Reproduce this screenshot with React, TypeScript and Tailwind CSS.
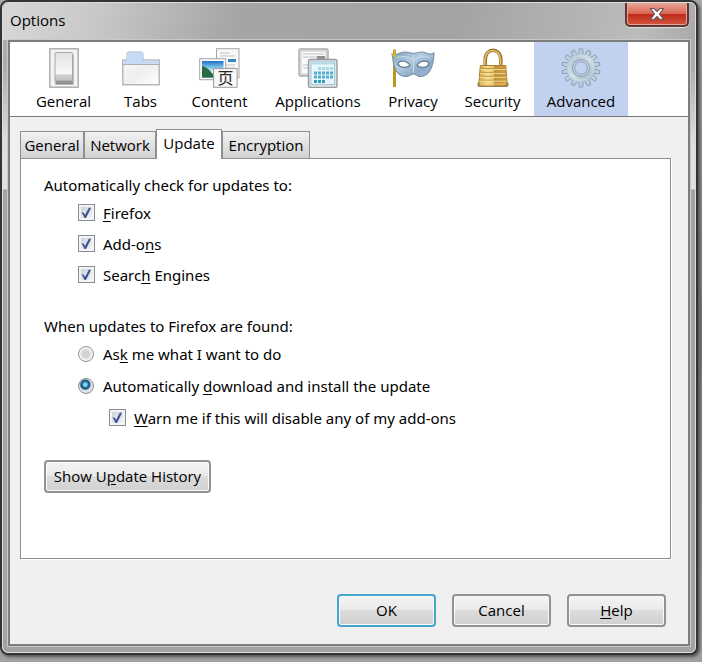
import { useState } from "react";
import type { ReactNode } from "react";

function GeneralIcon() {
  return (
    <svg width="30" height="40" viewBox="0 0 30 40" aria-hidden="true">
      <defs>
        <linearGradient id="switch-face" x1="0" y1="0" x2="0" y2="1">
          <stop offset="0" stopColor="#e2e2e2" />
          <stop offset="0.7" stopColor="#f8f8f8" />
          <stop offset="0.75" stopColor="#d2d2d2" />
          <stop offset="1" stopColor="#bcbcbc" />
        </linearGradient>
      </defs>
      <rect x="0.8" y="0.8" width="28.4" height="38.4" fill="#f3f3f3" stroke="#a5a5a5" strokeWidth="1.3" />
      <path d="M7 34 L6 36.500 H24.500 V7 L23 5 Z" fill="#888" />
      <rect x="6" y="4.500" width="17.500" height="30" rx="1" fill="url(#switch-face)" stroke="#a8a8a8" />
      <path d="M7 33.500 H23" stroke="#8b8b8b" strokeWidth="1.500" />
    </svg>
  );
}

function TabsIcon() {
  return (
    <svg width="38" height="40" viewBox="0 0 38 40" aria-hidden="true">
      <defs>
        <linearGradient id="tab-page" x1="0" y1="0" x2="1" y2="1">
          <stop offset="0" stopColor="#fafafa" />
          <stop offset="0.5" stopColor="#eeeeef" />
          <stop offset="1" stopColor="#fff" />
        </linearGradient>
      </defs>
      <path d="M5 12 V5.500 Q5 4 6.500 4 H19.500 Q21 4 21 5.500 V12" fill="#c9ddf8" stroke="#a9bddb" />
      <rect x="0.8" y="12" width="36.400" height="24.800" fill="url(#tab-page)" stroke="#a6a7a9" strokeWidth="1.200" />
      <path d="M1.300 16.500 V12.500 H5 V6 H20.500 V12.500 H36.700 V16.500 Z" fill="#c6daf6" />
      <path d="M1 16.500 H37" stroke="#aaaeb6" />
    </svg>
  );
}

function ContentIcon() {
  return (
    <svg width="42" height="40" viewBox="0 0 42 40" aria-hidden="true">
      <defs>
        <linearGradient id="photo" x1="0" y1="0" x2="0" y2="1">
          <stop offset="0" stopColor="#1c72c8" />
          <stop offset="0.450" stopColor="#8ed2ef" />
          <stop offset="0.650" stopColor="#d8f1f8" />
          <stop offset="1" stopColor="#3382ba" />
        </linearGradient>
      </defs>
      <rect x="17.500" y="0.700" width="22.500" height="29" fill="#f8f8f8" stroke="#a6a6a6" />
      <path d="M21 5 H31 M21 8 H36 M21 17 H36 M21 20 H36" stroke="#bbc4ca" />
      <path d="M29 12.500 H37" stroke="#3689bd" strokeWidth="3" />
      <rect x="0.700" y="10.700" width="26" height="21" fill="#fafafa" stroke="#a0a5a9" />
      <rect x="3" y="13" width="21.500" height="16.500" fill="url(#photo)" />
      <path d="M3 18 Q8 19 13 25 L17 29.500 H3 Z" fill="#286a46" />
      <path d="M12 25 L19 20 L24.500 26 V28 Z" fill="#eef6f4" />
      <rect x="14.600" y="20.600" width="23.500" height="18.700" fill="#f8f8f8" stroke="#9c9c9c" />
      <text x="26.500" y="36" fontSize="16" textAnchor="middle" fill="#252525" fontFamily="Noto Sans CJK SC, sans-serif">页</text>
    </svg>
  );
}

function ApplicationsIcon() {
  return (
    <svg width="40" height="40" viewBox="0 0 40 40" aria-hidden="true">
      <rect x="1" y="1" width="29" height="27" rx="1.500" fill="#e9ebed" stroke="#aaa" strokeWidth="1.400" />
      <rect x="3" y="3" width="25" height="23" fill="#fafafa" stroke="#c2c4c7" />
      <path d="M5 6 H26 M5 9 H24 M5 17 H11 M5 20 H10" stroke="#bcc1c5" />
      <rect x="19" y="8" width="8" height="4" fill="#8d9398" />
      <rect x="10.500" y="11.500" width="28.500" height="28" rx="2" fill="#dce5ea" stroke="#969da1" strokeWidth="1.400" />
      <rect x="13" y="14" width="23.500" height="22.500" fill="#e9f7fc" stroke="#a9c4cf" />
      <path d="M14 15.500 H36" stroke="#b2dae9" strokeWidth="2" />
      <path d="M20 20.500 H35" stroke="#a5d7e9" strokeWidth="3" strokeDasharray="3 1" />
      <path d="M16 25 H35 M16 29 H35" stroke="#55aece" strokeWidth="3" strokeDasharray="3 1" />
      <path d="M16 33.500 H27" stroke="#389abd" strokeWidth="3" strokeDasharray="3 1" />
    </svg>
  );
}

function PrivacyIcon() {
  return (
    <svg width="44" height="40" viewBox="0 0 44 40" aria-hidden="true">
      <defs>
        <linearGradient id="mask" x1="0" y1="0" x2="1" y2="1">
          <stop offset="0" stopColor="#7f9fbb" />
          <stop offset="0.400" stopColor="#b3cbe0" />
          <stop offset="0.700" stopColor="#8caac7" />
          <stop offset="1" stopColor="#a7c3dc" />
        </linearGradient>
      </defs>
      <path d="M3.500 2 V39" stroke="#bf9421" strokeWidth="3" />
      <path d="M1 6 Q6 7 9 5 C14 3 18 4 22.500 5.500 C27 4 31 3 35 5 Q39 7 43 5 C43 10 42 15 41 18 C39 25 34 29 28 28.500 C26 28 25 26 22.500 26 C20 26 19 28 16 28.500 C10 29 5 25 3 18 C2 14 2 9 1 6 Z" fill="url(#mask)" stroke="#7890a5" strokeWidth="1.100" />
      <path d="M6 10 C11 7 18 9 22.500 12 C27 9 34 7 39 10" fill="none" stroke="#c8dced" strokeWidth="1.200" />
      <path d="M7 16 C8 12 16 12 19 17.500 C16 20.500 9 20 7 16 Z M38 16 C37 12 29 12 26 17.500 C29 20.500 36 20 38 16 Z" fill="#fff" stroke="#627a92" strokeWidth="1.200" />
      <path d="M22.500 7 V25" stroke="#c7d9e7" />
      <path d="M3.500 1 V10 M1 7 H5" stroke="#d7b334" strokeWidth="1.600" />
    </svg>
  );
}

function SecurityIcon() {
  return (
    <svg width="34" height="40" viewBox="0 1 34 41" aria-hidden="true">
      <defs>
        <linearGradient id="brass" x1="0" y1="0" x2="1" y2="0">
          <stop offset="0" stopColor="#d3a949" />
          <stop offset="0.300" stopColor="#f8df92" />
          <stop offset="0.520" stopColor="#ecca6d" />
          <stop offset="0.550" stopColor="#c1903a" />
          <stop offset="1" stopColor="#d2a342" />
        </linearGradient>
      </defs>
      <path d="M9 21 V13 C9 0 25 0 25 13 V21" fill="none" stroke="#967127" strokeWidth="3.600" />
      <path d="M8.600 20 V13 C9 0.500 24.500 0.500 24.700 13 V20" fill="none" stroke="#e3c372" strokeWidth="1.600" />
      <rect x="1" y="36" width="32" height="5" rx="2" fill="#948670" />
      <path d="M4 19 H30 L31.500 37 Q31 40 28 40 H6 Q2 40 2.500 37 Z" fill="url(#brass)" stroke="#a67c2b" />
      <path d="M4 22 H30 M4 26 H30 M3 30 H31 M3 34 H31" stroke="#b78e3b" />
      <path d="M4 23 H30 M4 27 H30 M3 31 H31 M3 35 H31" stroke="#f4db91" />
      <path d="M4 38 H30" stroke="#e9c77a" />
    </svg>
  );
}

function AdvancedIcon() {
  const teeth = Array.from({ length: 14 }, (_, index) => (index * 360) / 14);
  return (
    <svg width="40" height="40" viewBox="0 0 42 42" aria-hidden="true">
      <defs>
        <linearGradient id="gear" x1="0" y1="0" x2="1" y2="1">
          <stop offset="0" stopColor="#a3bbcd" />
          <stop offset="0.500" stopColor="#d2e0e7" />
          <stop offset="1" stopColor="#9aafc0" />
        </linearGradient>
      </defs>
      {teeth.map((angle) => (
        <path key={angle} d="M18.500 8 L19.300 1 H22.700 L23.500 8 Z" fill="#bccfda" stroke="#8299ad" strokeWidth="0.900" transform={`rotate(${angle} 21 21)`} />
      ))}
      <circle cx="21" cy="21" r="15" fill="url(#gear)" />
      <circle cx="21" cy="21" r="13" fill="none" stroke="#d5e3e9" strokeWidth="0.800" />
      <circle cx="21" cy="21" r="9" fill="#bdccd9" stroke="#93a9bb" strokeWidth="1.200" />
      <circle cx="21" cy="21" r="6.500" fill="#c2d1ef" stroke="#91a7bc" />
    </svg>
  );
}

const sections = [
  { name: "General", icon: <GeneralIcon />, width: "w-[79px]" },
  { name: "Tabs", icon: <TabsIcon />, width: "w-[75px]" },
  { name: "Content", icon: <ContentIcon />, width: "w-[83px]" },
  { name: "Applications", icon: <ApplicationsIcon />, width: "w-[114px]" },
  { name: "Privacy", icon: <PrivacyIcon />, width: "w-[76px]" },
  { name: "Security", icon: <SecurityIcon />, width: "w-[83px]" },
  { name: "Advanced", icon: <AdvancedIcon />, width: "w-[94px]" },
];

const pages = [
  { name: "General", width: "w-16" },
  { name: "Network", width: "w-[72px]" },
  { name: "Update", width: "w-[66px]" },
  { name: "Encryption", width: "w-[88px]" },
];

function Key({ children }: { children: ReactNode }) {
  return <span className="underline underline-offset-2">{children}</span>;
}

function CheckRow({ id, children }: { id: string; children: ReactNode }) {
  return (
    <div className="flex h-[31px] items-center gap-2">
      <span className="grid size-[18px] place-items-center">
        <input id={id} type="checkbox" defaultChecked className="peer col-start-1 row-start-1 size-[17px] appearance-none border border-[#898c91] bg-linear-to-br from-[#c5ccda] to-[#f8f9fb] shadow-[inset_0_0_0_2px_#f4f4f4]" />
        <svg viewBox="0 0 18 18" className="pointer-events-none invisible col-start-1 row-start-1 size-[18px] peer-checked:visible" aria-hidden="true">
          <path d="M4.500 8 L7 9 L8 11 L12 3.500 L14 4 L9 14 L7.500 14 Z" fill="#40538f" />
        </svg>
      </span>
      <label htmlFor={id}>{children}</label>
    </div>
  );
}

function RadioRow({ id, checked, children }: { id: string; checked?: boolean; children: ReactNode }) {
  return (
    <div className="flex h-8 items-center gap-2">
      <span className="grid size-[18px] place-items-center">
        <input id={id} name="update-action" type="radio" defaultChecked={checked} className="size-4 appearance-none rounded-full border border-[#909396] bg-[radial-gradient(circle,#d0d1d3_0_3px,#e4e4e4_5px,#f5f5f5_6px)] checked:bg-[radial-gradient(circle_at_45%_40%,#8edaf5_0_1px,#2484b8_3px,#123f65_4px,#d9e4ec_6px)]" />
      </span>
      <label htmlFor={id}>{children}</label>
    </div>
  );
}

const buttonStyle =
  "h-[33px] rounded-[4px] border-2 bg-[linear-gradient(#f4f4f4_0,#e9e9e9_49%,#dcdcdc_50%,#d0d0d0_100%)] shadow-[inset_0_0_0_1px_#f9f9f9]";

export default function App() {
  const [section, setSection] = useState("Advanced");
  const [page, setPage] = useState("Update");

  return (
    <main className="flex min-h-screen bg-linear-to-b from-[#a8a8a8] via-[#777] to-[#a1a1a1] pr-1 pb-[7px] font-['Open_Sans','Noto_Sans',sans-serif] text-[15px] leading-5 text-black">
      <div className="flex flex-1 flex-col rounded-lg border-2 border-[#343434] bg-[#a6a6a6] shadow-[2px_2px_3px_#555]">
        <div className="flex flex-1 flex-col rounded-md border border-[#dcdcdc] bg-[linear-gradient(#b0b0b0_0,#aaa_60px,#dedede_140px,#e2e2e2_186px,#a3a3a3_187px)] px-[5px] pb-[6px]">
          <header className="-mx-[5px] flex h-[37px] justify-between rounded-t-md bg-[linear-gradient(100deg,#d7d7d7_0,#c9c9c9_13%,#a5a5a5_34%,#a3a3a3_65%,#bcbcbc_92%,#aaa)] pr-1.5 pl-[7px]">
            <h1 className="pt-[7px]">Options</h1>
            <button aria-label="Close" className="flex h-6 w-[64px] items-center justify-center rounded-b-[5px] border-2 border-t-0 border-[#5c3835] bg-[linear-gradient(#e8a697_0,#d96754_48%,#bd2a17_50%,#d4563f_100%)] shadow-[inset_0_0_0_1px_#e6a396,0_1px_0_#ddd]">
              <svg width="16" height="14" viewBox="0 0 16 14" aria-hidden="true">
                <path d="M1.500 1.500 H5 L8 4.500 L11 1.500 H14.500 L10.500 7 L14.500 12.500 H11 L8 9.500 L5 12.500 H1.500 L5.500 7 Z" fill="#fff" stroke="#6d5660" strokeWidth="1.200" />
              </svg>
            </button>
          </header>

          <div className="flex flex-1 flex-col border-2 border-[#7d7d7d] bg-[#f0f0f0] outline outline-[#c9c9c9]">
            <nav className="flex h-[75px] border-b border-[#777] bg-white pl-[14px]" aria-label="Sections">
              {sections.map((item) => (
                <button
                  key={item.name}
                  onClick={() => setSection(item.name)}
                  aria-pressed={section === item.name}
                  className={`${item.width} flex shrink-0 flex-col items-center ${section === item.name ? "bg-[#c2d1ef]" : ""}`}
                >
                  <span className="flex h-[49px] items-end pb-[3px]">{item.icon}</span>
                  <span>{item.name}</span>
                </button>
              ))}
            </nav>

            <section className="flex flex-1 flex-col pt-[11px] pr-[17px] pl-[10px]">
              <div role="tablist" className="flex h-[30px] items-end">
                {pages.map((item) => (
                  <button
                    key={item.name}
                    role="tab"
                    aria-selected={page === item.name}
                    onClick={() => setPage(item.name)}
                    className={`${item.width} border border-[#8b8e92] ${page === item.name ? "z-10 -mb-px h-[30px] border-b-0 bg-white pb-1" : "h-[27px] border-b-0 bg-linear-to-b from-[#f1f1f1] to-[#d2d2d2]"}`}
                  >
                    {item.name}
                  </button>
                ))}
              </div>

              <div role="tabpanel" aria-label={page} className="flex-1 border border-[#8b8e92] bg-white px-[23px] pt-4 shadow-[1px_1px_0_#fff]">
                <fieldset className="font-['Noto_Sans','Open_Sans',sans-serif]">
                  <legend>Automatically check for updates to:</legend>
                  <div className="flex flex-col pt-0.5 pl-[33px]">
                    <CheckRow id="check-firefox"><Key>F</Key>irefox</CheckRow>
                    <CheckRow id="check-addons">Add-o<Key>n</Key>s</CheckRow>
                    <CheckRow id="check-search">Searc<Key>h</Key> Engines</CheckRow>
                  </div>
                </fieldset>
                <fieldset className="pt-[26px] font-['Noto_Sans','Open_Sans',sans-serif]">
                  <legend className="contents">When updates to Firefox are found:</legend>
                  <div className="flex flex-col pt-0.5 pl-[33px]">
                    <RadioRow id="ask">As<Key>k</Key> me what I want to do</RadioRow>
                    <RadioRow id="auto" checked>Automatically <Key>d</Key>ownload and install the update</RadioRow>
                    <div className="pl-[31px]">
                      <CheckRow id="warn"><Key>W</Key>arn me if this will disable any of my add-ons</CheckRow>
                    </div>
                  </div>
                </fieldset>
                <button className={`${buttonStyle} mt-[27px] w-[167px] border-[#929292] pb-0.5`}>
                  Show U<Key>p</Key>date History
                </button>
              </div>
            </section>

            <footer className="flex h-[85px] items-end justify-end gap-4 pr-[22px] pb-[17px]">
              <button className={`${buttonStyle} w-[99px] border-[#45a5cc] pb-0.5`}>OK</button>
              <button className={`${buttonStyle} w-[99px] border-[#929292] pb-0.5`}>Cancel</button>
              <button className={`${buttonStyle} w-[99px] border-[#929292] pb-0.5`}><Key>H</Key>elp</button>
            </footer>
          </div>
        </div>
      </div>
    </main>
  );
}
